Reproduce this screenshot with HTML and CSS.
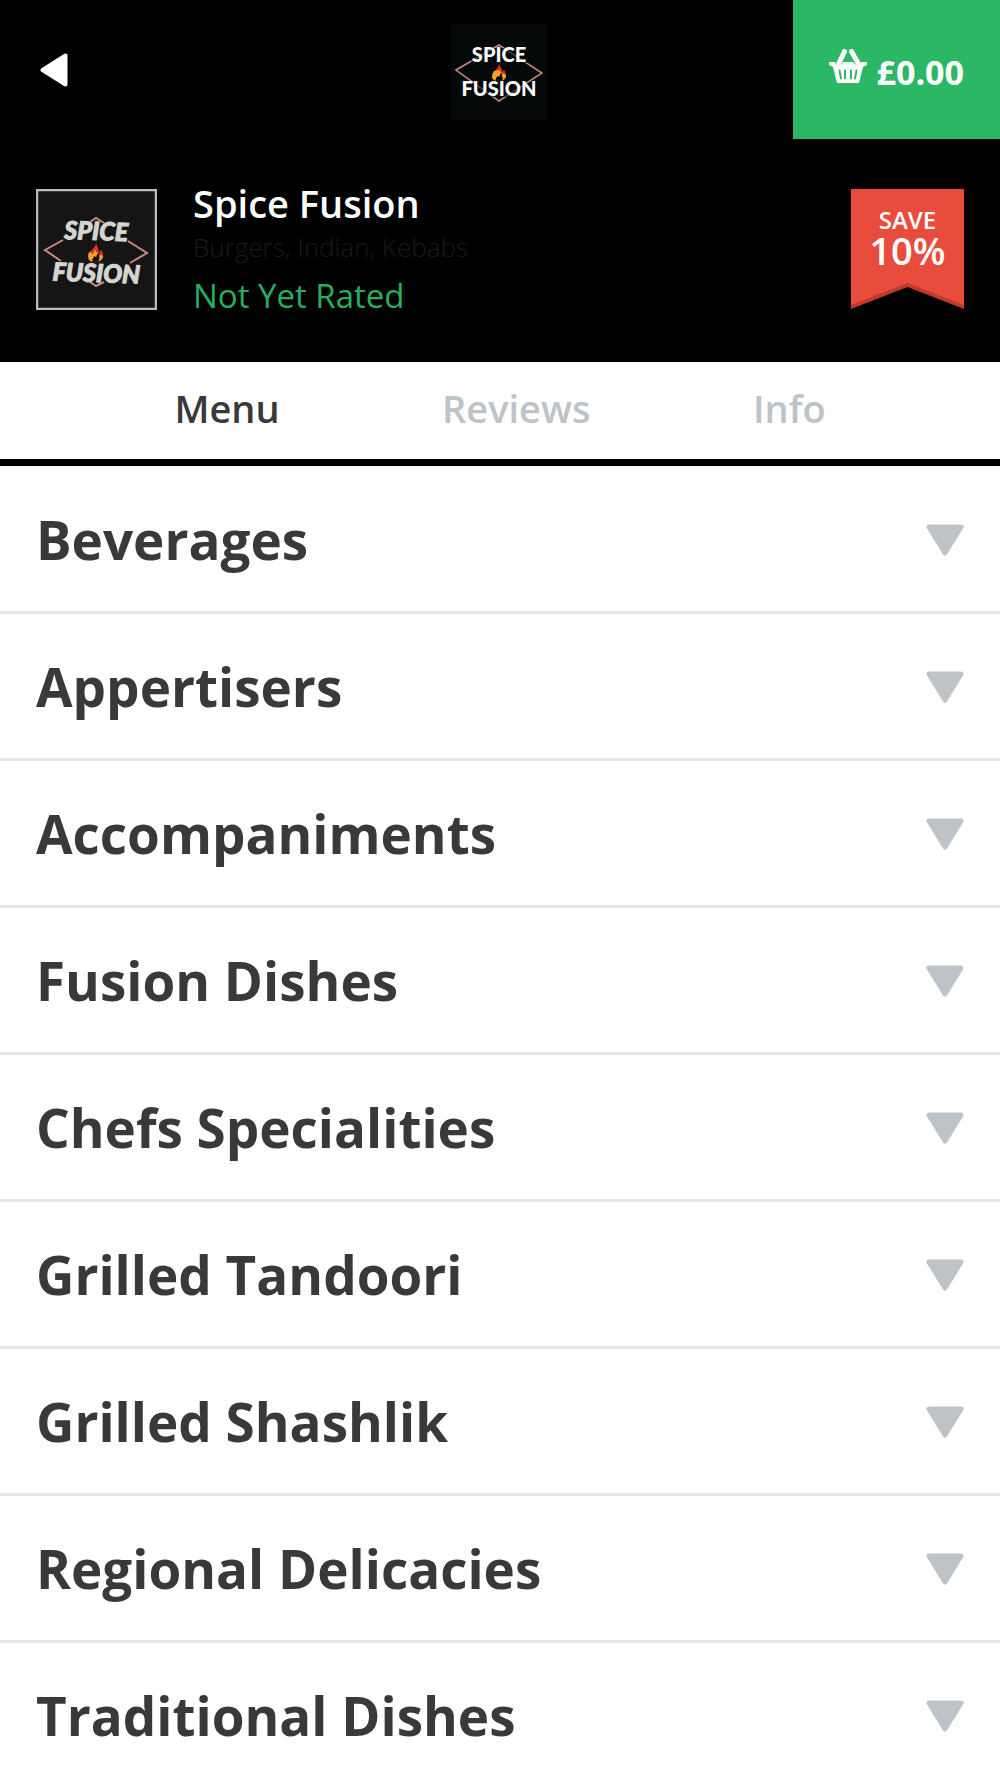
FILE: index.html
```html
<!DOCTYPE html>
<html lang="en">
<head>
  <meta charset="utf-8">
  <meta name="viewport" content="width=device-width, initial-scale=1">
  <title>Spice Fusion</title>
  <link rel="stylesheet" href="styles.css">
</head>
<body>
  <header class="topbar">
    <button class="back" type="button" aria-label="Back">
      <svg width="28" height="34" viewBox="0 0 28 34"><path d="M2.5 17 25.5 2.5v29z" fill="#fff" stroke="#fff" stroke-width="4" stroke-linejoin="round"/></svg>
    </button>
    <a class="brand" href="#" aria-label="Spice Fusion">
      <svg width="96" height="96" viewBox="0 0 96 96">
        <rect width="96" height="96" fill="#040808"/>
        <path d="M5 46 48 21l43 28-43 28z" fill="none" stroke="#c98882" stroke-width="1.5"/>
        <path d="M20 24h56v15H20zM12 59h72v14H12z" fill="#040808" opacity=".6"/>
        <path d="M48 39c0 7-7 8-7 13 0 3 3 5 7 5s7-2 7-6c0-3-2-5-2-5l-2 2c1-4-3-5-3-9z" fill="#d9301f"/>
        <path d="M43 47c-1 2-2 4-2 6 0 2 3 4 7 4s7-2 7-6l-4-2-3-3z" fill="#f6a61b"/>
        <path d="M45 57c-1-3 1-3 1-5l2 1c1-2 1-4 3-4-1 4 2 4 0 8z" fill="#040808"/>
        <text class="mark mark-small" x="48" y="38">SPICE</text>
        <text class="mark mark-small" x="48" y="72">FUSION</text>
      </svg>
    </a>
    <button class="basket" type="button">
      <svg width="38" height="34" viewBox="0 0 38 34">
        <path d="M15.500 2.500 10 14M22.500 2.500 29 14" stroke="#fff" stroke-width="5" stroke-linecap="round"/>
        <path d="M0 13h6l1 2c3 2 6 1 7-2h10c2 3 5 4 7 2l1-2h6v3l-4 2-4 16H8L4 18l-4-2z" fill="#fff"/>
        <path d="M10.500 21.500 12 29.500M16 21.500V29.500M22 21.500V29.500M27.500 21.500 26 29.500" stroke="#2bb766" stroke-width="2" stroke-linecap="round"/>
      </svg>
      <span>£0.00</span>
    </button>
  </header>

  <section class="restaurant">
    <svg class="thumb" width="121" height="121" viewBox="0 0 121 121">
      <rect x="1" y="1" width="119" height="119" fill="#151515" stroke="#babdbf" stroke-width="2.500"/>
      <path d="M27 51 9 61l16 11M92 52l19 12-17 10M54 33l6-4 8 5M54 93l6 4 8-4" fill="none" stroke="#c98882" stroke-width="2"/>
      <path d="M60 52c1 8-8 9-8 16 0 3 2 5 5 5 4 1 9-1 10-5 1-4-2-7-2-7l-2 3c0-5-3-7-3-12z" fill="#d9352a"/>
      <path d="M53 63c-1 3-1 5 0 7 2 3 5 3 8 3 4-1 6-3 6-6l-5-2-3-4-2 4z" fill="#efa52c"/>
      <path d="M57 73c-2-3 1-4 1-6l2 1c1-3 2-4 4-4-2 4 1 5-2 9z" fill="#151515"/>
      <text class="mark mark-large" x="60" y="51" transform="rotate(2 60 51)">SPICE</text>
      <text class="mark mark-large" x="60" y="93" transform="rotate(2 60 93)">FUSION</text>
    </svg>
    <div class="details">
      <h1 class="name">Spice Fusion</h1>
      <p class="cuisines">Burgers, Indian, Kebabs</p>
      <p class="rating">Not Yet Rated</p>
    </div>
    <div class="offer">
      <span class="offer-label">SAVE</span>
      <span class="offer-value">10%</span>
      <svg class="offer-tail" viewBox="0 0 113 26" width="113" height="26"><path d="M0 0h113v26L56.500 4 0 26z" fill="#c03a2b"/><path d="M0 0h113v22L56.500 0 0 22z" fill="#e84c3d"/></svg>
    </div>
  </section>

  <nav class="tabs">
    <a class="tab tab-active" href="#menu" aria-current="page">Menu</a>
    <a class="tab" href="#reviews">Reviews</a>
    <a class="tab" href="#info">Info</a>
  </nav>

  <main class="menu" id="menu">
    <button class="category" type="button"><span>Beverages</span><svg class="arrow" viewBox="0 0 38 32"><path d="M3 3h32L19 29z"/></svg></button>
    <button class="category" type="button"><span>Appertisers</span><svg class="arrow" viewBox="0 0 38 32"><path d="M3 3h32L19 29z"/></svg></button>
    <button class="category" type="button"><span>Accompaniments</span><svg class="arrow" viewBox="0 0 38 32"><path d="M3 3h32L19 29z"/></svg></button>
    <button class="category" type="button"><span>Fusion Dishes</span><svg class="arrow" viewBox="0 0 38 32"><path d="M3 3h32L19 29z"/></svg></button>
    <button class="category" type="button"><span>Chefs Specialities</span><svg class="arrow" viewBox="0 0 38 32"><path d="M3 3h32L19 29z"/></svg></button>
    <button class="category" type="button"><span>Grilled Tandoori</span><svg class="arrow" viewBox="0 0 38 32"><path d="M3 3h32L19 29z"/></svg></button>
    <button class="category" type="button"><span>Grilled Shashlik</span><svg class="arrow" viewBox="0 0 38 32"><path d="M3 3h32L19 29z"/></svg></button>
    <button class="category" type="button"><span>Regional Delicacies</span><svg class="arrow" viewBox="0 0 38 32"><path d="M3 3h32L19 29z"/></svg></button>
    <button class="category" type="button"><span>Traditional Dishes</span><svg class="arrow" viewBox="0 0 38 32"><path d="M3 3h32L19 29z"/></svg></button>
  </main>
</body>
</html>
```
FILE: styles.css
```css
* {
  box-sizing: border-box;
}

body {
  margin: 0;
  background: #fff;
  color: #39393b;
  font-family: "Open Sans", sans-serif;
}

button {
  border: 0;
  background: none;
  color: inherit;
  font: inherit;
  cursor: pointer;
}

a {
  color: inherit;
  text-decoration: none;
}

svg {
  display: block;
  flex: none;
}

.topbar {
  display: grid;
  grid-template-columns: 1fr auto 1fr;
  align-items: center;
  background: #000;
}

.back {
  justify-self: start;
  padding: 16px 40px;
}

.brand {
  padding: 5px 2px 0 0;
}

.basket {
  display: flex;
  justify-self: end;
  gap: 10px;
  padding: 49px 36px 44px;
  background: #2bb766;
  color: #fff;
  font-size: 34px;
  font-weight: 700;
  line-height: 46px;
}

.mark {
  font-family: Lato, sans-serif;
  font-weight: 900;
  text-anchor: middle;
}

.mark-small {
  fill: #fff;
  font-size: 20px;
}

.mark-large {
  fill: #d3d5d0;
  stroke: #d3d5d0;
  stroke-width: 1px;
  font-size: 25px;
  font-style: italic;
}

.restaurant {
  display: flex;
  gap: 36px;
  padding: 50px 36px 43px;
  background: #000;
}

.details {
  flex: 1;
  margin-top: -12px;
}

.name,
.cuisines,
.rating {
  margin: 0;
}

.name {
  color: #fff;
  font-size: 38px;
  font-weight: 600;
  line-height: 52px;
}

.cuisines {
  color: #191b1b;
  font-size: 26px;
  font-weight: 300;
  line-height: 36px;
}

.rating {
  padding-top: 8px;
  color: #27ae60;
  font-size: 33px;
  line-height: 46px;
}

.offer {
  display: flex;
  flex-direction: column;
  width: 113px;
  height: 120px;
  padding-top: 16px;
  background: linear-gradient(#e84c3d, #e84c3d) top / 100% 96px no-repeat;
  color: #fff;
  text-align: center;
}

.offer-label {
  font-size: 24px;
  font-weight: 600;
  line-height: 30px;
}

.offer-value {
  font-size: 38px;
  font-weight: 600;
  line-height: 30px;
}

.offer-tail {
  margin-top: auto;
}

.tabs {
  display: flex;
  justify-content: space-evenly;
  padding: 0 12px 4px;
  border-bottom: 7px solid #000;
  font-size: 38px;
  font-weight: 600;
  line-height: 93px;
}

.tab {
  color: #bdc3c7;
}

.tab-active {
  color: #39393b;
}

.menu {
  padding-top: 1px;
}

.category {
  display: flex;
  align-items: center;
  justify-content: space-between;
  width: 100%;
  padding: 37px 36px 35px;
  border-bottom: 3px solid #e5e5e5;
  font-size: 53px;
  font-weight: 700;
  line-height: 72px;
  text-align: left;
}

.arrow {
  width: 38px;
  height: 32px;
  fill: #bdc3c7;
  stroke: #bdc3c7;
  stroke-width: 5;
  stroke-linejoin: round;
}
```
